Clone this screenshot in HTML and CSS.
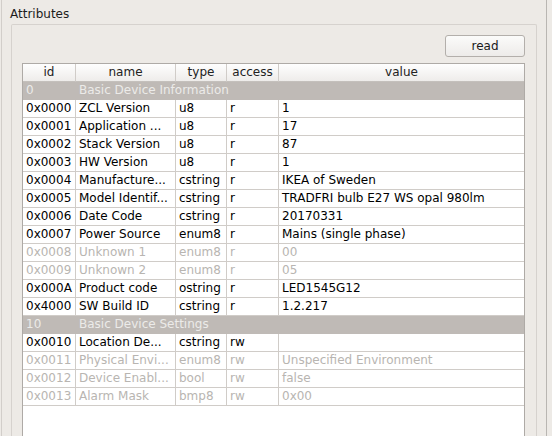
FILE: index.html
```html
<!DOCTYPE html>
<html>
<head>
<meta charset="utf-8">
<link rel="stylesheet" href="styles.css">
</head>
<body>
<div class="frame">
  <div class="title">Attributes</div>
  <div class="group">
    <div class="toolbar"><button class="btn">read</button></div>
    <div class="table">
      <div class="row head">
        <div class="c">id</div><div class="c">name</div><div class="c">type</div><div class="c">access</div><div class="c last">value</div>
      </div>
      <div class="row grp"><div class="c">0</div><div class="c span">Basic Device Information</div></div>
      <div class="row"><div class="c">0x0000</div><div class="c">ZCL Version</div><div class="c">u8</div><div class="c">r</div><div class="c last">1</div></div>
      <div class="row"><div class="c">0x0001</div><div class="c">Application ...</div><div class="c">u8</div><div class="c">r</div><div class="c last">17</div></div>
      <div class="row"><div class="c">0x0002</div><div class="c">Stack Version</div><div class="c">u8</div><div class="c">r</div><div class="c last">87</div></div>
      <div class="row"><div class="c">0x0003</div><div class="c">HW Version</div><div class="c">u8</div><div class="c">r</div><div class="c last">1</div></div>
      <div class="row"><div class="c">0x0004</div><div class="c">Manufacture...</div><div class="c">cstring</div><div class="c">r</div><div class="c last">IKEA of Sweden</div></div>
      <div class="row"><div class="c">0x0005</div><div class="c">Model Identif...</div><div class="c">cstring</div><div class="c">r</div><div class="c last">TRADFRI bulb E27 WS opal 980lm</div></div>
      <div class="row"><div class="c">0x0006</div><div class="c">Date Code</div><div class="c">cstring</div><div class="c">r</div><div class="c last">20170331</div></div>
      <div class="row"><div class="c">0x0007</div><div class="c">Power Source</div><div class="c">enum8</div><div class="c">r</div><div class="c last">Mains (single phase)</div></div>
      <div class="row dis"><div class="c">0x0008</div><div class="c">Unknown 1</div><div class="c">enum8</div><div class="c">r</div><div class="c last">00</div></div>
      <div class="row dis"><div class="c">0x0009</div><div class="c">Unknown 2</div><div class="c">enum8</div><div class="c">r</div><div class="c last">05</div></div>
      <div class="row"><div class="c">0x000A</div><div class="c">Product code</div><div class="c">ostring</div><div class="c">r</div><div class="c last">LED1545G12</div></div>
      <div class="row"><div class="c">0x4000</div><div class="c">SW Build ID</div><div class="c">cstring</div><div class="c">r</div><div class="c last">1.2.217</div></div>
      <div class="row grp"><div class="c">10</div><div class="c span">Basic Device Settings</div></div>
      <div class="row"><div class="c">0x0010</div><div class="c">Location De...</div><div class="c">cstring</div><div class="c">rw</div><div class="c last"></div></div>
      <div class="row dis"><div class="c">0x0011</div><div class="c">Physical Envi...</div><div class="c">enum8</div><div class="c">rw</div><div class="c last">Unspecified Environment</div></div>
      <div class="row dis"><div class="c">0x0012</div><div class="c">Device Enabl...</div><div class="c">bool</div><div class="c">rw</div><div class="c last">false</div></div>
      <div class="row dis"><div class="c">0x0013</div><div class="c">Alarm Mask</div><div class="c">bmp8</div><div class="c">rw</div><div class="c last">0x00</div></div>
    </div>
  </div>
</div>
</body>
</html>
```
FILE: styles.css
```css
html, body {
  margin: 0;
  padding: 0;
  background: #edeae6;
  overflow: hidden;
  height: 436px;
}
body {
  font-family: "DejaVu Sans", sans-serif;
  font-size: 12px;
  color: #000;
}
.frame {
  margin-left: 1px;
  width: 546px;
  height: 436px;
  box-sizing: border-box;
  border-left: 1px solid #d2ceca;
  border-right: 1px solid #b9b6b2;
  overflow: hidden;
}
.title {
  padding: 7px 0 0 8px;
  line-height: 14px;
  height: 17px;
  color: #1c1c1c;
}
.group {
  margin-left: 9px;
  width: 526px;
  height: 412px;
  box-sizing: border-box;
  border: 1px solid #d6d2ce;
  border-bottom: none;
  border-radius: 2px 2px 0 0;
  padding: 10px 11px 0 10px;
  overflow: hidden;
}
.toolbar {
  display: flex;
  justify-content: flex-end;
}
.btn {
  width: 80px;
  height: 22px;
  box-sizing: border-box;
  border: 1px solid #b3afab;
  border-radius: 3px;
  background: linear-gradient(#fbfbfa, #edebe9);
  font-family: "DejaVu Sans", sans-serif;
  font-size: 12px;
  color: #1a1a1a;
  padding: 0;
  margin: 0;
}
.table {
  margin-top: 6px;
  width: 503px;
  height: 373px;
  box-sizing: border-box;
  border: 1px solid #aeaaa6;
  border-bottom: none;
  background: #fff;
}
.row {
  display: grid;
  grid-template-columns: 53px 100px 51px 52px 245px;
  height: 18px;
}
.c {
  box-sizing: border-box;
  height: 18px;
  line-height: 17px;
  padding-left: 3px;
  border-right: 1px solid #d0ccc8;
  border-bottom: 1px solid #d0ccc8;
  white-space: nowrap;
  overflow: hidden;
}
.c.last {
  border-right: none;
}
.head .c {
  background: linear-gradient(#fefefe, #eeecea);
  border-bottom: 1px solid #c4c0bc;
  text-align: center;
  padding-left: 0;
  color: #222;
}
.grp {
  background: #bfbab6;
}
.grp .c {
  border: none;
  color: #ecebe9;
}
.grp .span {
  grid-column: 2 / 6;
}
.dis .c {
  color: #b8b5b1;
}
```
